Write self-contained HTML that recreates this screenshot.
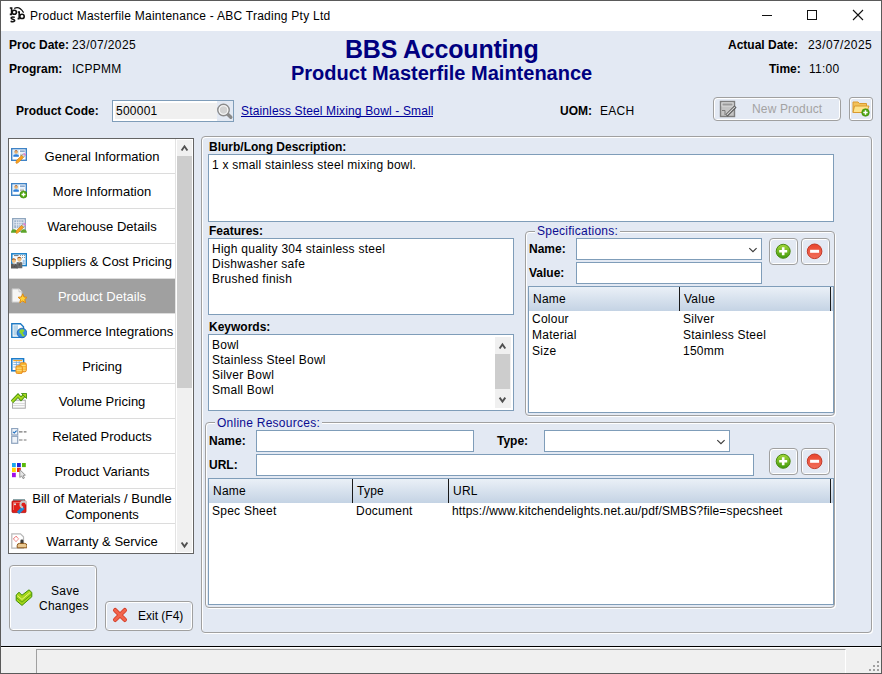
<!DOCTYPE html>
<html><head><meta charset="utf-8">
<style>
*{box-sizing:border-box}
html,body{margin:0;padding:0}
body{width:882px;height:674px;position:relative;overflow:hidden;background:#e3e9f3;font-family:"Liberation Sans",sans-serif;color:#000}
.a{position:absolute}
.t{position:absolute;white-space:nowrap;font-size:12px;line-height:12px;letter-spacing:0.25px}
.b{font-weight:bold;letter-spacing:0}
.box{position:absolute;background:#fff;border:1px solid #7f9db9}
.grp{position:absolute;border:1px solid #a0a0a0;border-radius:4px;box-shadow:inset 1px 1px 0 #fff, 1px 1px 0 #fff}
.btn{position:absolute;border:1px solid #a0a0a0;border-radius:4px;background:#e3e9f3;box-shadow:inset 1px 1px 0 #fff,inset -1px -1px 0 #fff}
.hdr{position:absolute;background:linear-gradient(#eaf0f7,#c4d3e4)}
.sep{position:absolute;background:#1a1a1a;width:1px}
.nt{position:absolute;left:29px;width:146px;text-align:center;font-size:13px;line-height:13px;white-space:nowrap}
.gl{position:absolute;white-space:nowrap;font-size:12px;line-height:12px;color:#0c0c90;background:#e3e9f3;padding:0 2px}
</style></head>
<body>
<!-- window frame -->
<div class="a" style="left:0;top:0;width:882px;height:31px;background:#fff"></div>
<div class="a" style="left:0;top:646px;width:882px;height:1px;background:#000"></div>
<div class="a" style="left:0;top:647px;width:882px;height:27px;background:#f0f0f0;border-top:1px solid #fff"></div>
<div class="a" style="left:36px;top:649px;width:810px;height:24px;border-left:1px solid #a0a0a0;border-top:1px solid #a0a0a0;border-right:1px solid #fff"></div>
<div class="a" style="left:0;top:0;width:882px;height:674px;border:1px solid #5a5a5a"></div>

<!-- title bar -->
<div class="t" style="left:30px;top:10px">Product Masterfile Maintenance - ABC Trading Pty Ltd</div>

<!-- header -->
<div class="t b" style="left:9px;top:39px">Proc Date:</div>
<div class="t" style="left:72px;top:39px;letter-spacing:0.4px">23/07/2025</div>
<div class="t b" style="left:9px;top:63px">Program:</div>
<div class="t" style="left:72px;top:63px">ICPPMM</div>
<div class="t b" style="left:345px;top:37px;font-size:25px;line-height:25px;letter-spacing:-0.2px;color:#000080">BBS Accounting</div>
<div class="t b" style="left:291px;top:63px;font-size:20px;line-height:20px;color:#000080">Product Masterfile Maintenance</div>
<div class="t b" style="left:728px;top:39px">Actual Date:</div>
<div class="t" style="left:808px;top:39px;letter-spacing:0.4px">23/07/2025</div>
<div class="t b" style="left:769px;top:63px">Time:</div>
<div class="t" style="left:809px;top:63px">11:00</div>

<div class="t b" style="left:16px;top:105px">Product Code:</div>
<div class="box" style="left:112px;top:100px;width:122px;height:22px"></div><div class="a" style="left:115px;top:103px;width:102px;height:16px;background:#f0f0f0"></div>
<div class="t" style="left:116px;top:105px">500001</div>
<div class="t" style="left:241px;top:105px;color:#00009a;letter-spacing:0.15px">Stainless Steel Mixing Bowl - Small</div><div class="a" style="left:241px;top:116px;width:192px;height:1px;background:#00009a"></div>
<div class="t b" style="left:560px;top:105px">UOM:</div>
<div class="t" style="left:600px;top:105px">EACH</div>
<div class="btn" style="left:713px;top:97px;width:128px;height:24px"></div>
<div class="t" style="left:752px;top:103px;letter-spacing:0.15px;color:#a3a3a3">New Product</div>
<div class="btn" style="left:849px;top:97px;width:24px;height:24px;border-radius:3px"></div>

<!-- nav list -->
<div class="a" style="left:8px;top:138px;width:186px;height:416px;background:#fff;border:1px solid #646464"></div>
<div class="a" style="left:9px;top:173px;width:166px;height:1px;background:#dcdcdc"></div>
<div class="nt" style="top:150px">General Information</div>
<div class="a" style="left:9px;top:208px;width:166px;height:1px;background:#dcdcdc"></div>
<div class="nt" style="top:185px">More Information</div>
<div class="a" style="left:9px;top:243px;width:166px;height:1px;background:#dcdcdc"></div>
<div class="nt" style="top:220px">Warehouse Details</div>
<div class="a" style="left:9px;top:278px;width:166px;height:1px;background:#dcdcdc"></div>
<div class="nt" style="top:255px">Suppliers &amp; Cost Pricing</div>
<div class="a" style="left:9px;top:279px;width:166px;height:34px;background:#a0a0a0"></div>
<div class="a" style="left:9px;top:313px;width:166px;height:1px;background:#dcdcdc"></div>
<div class="nt" style="top:290px;color:#fff">Product Details</div>
<div class="a" style="left:9px;top:348px;width:166px;height:1px;background:#dcdcdc"></div>
<div class="nt" style="top:325px">eCommerce Integrations</div>
<div class="a" style="left:9px;top:383px;width:166px;height:1px;background:#dcdcdc"></div>
<div class="nt" style="top:360px">Pricing</div>
<div class="a" style="left:9px;top:418px;width:166px;height:1px;background:#dcdcdc"></div>
<div class="nt" style="top:395px">Volume Pricing</div>
<div class="a" style="left:9px;top:453px;width:166px;height:1px;background:#dcdcdc"></div>
<div class="nt" style="top:430px">Related Products</div>
<div class="a" style="left:9px;top:488px;width:166px;height:1px;background:#dcdcdc"></div>
<div class="nt" style="top:465px">Product Variants</div>
<div class="a" style="left:9px;top:523px;width:166px;height:1px;background:#dcdcdc"></div>
<div class="nt" style="top:491px;line-height:16px">Bill of Materials / Bundle<br>Components</div>
<div class="nt" style="top:535px">Warranty &amp; Service</div>

<!--ICONS-->
<svg class="a" style="left:11px;top:148px" width="16" height="16" viewBox="0 0 16 16"><rect x="0.7" y="0.7" width="14.6" height="11.6" fill="#fff" stroke="#3f83c6" stroke-width="1.4"/>
<rect x="3" y="12" width="2" height="1" fill="#3f83c6"/><rect x="7" y="12" width="3" height="1" fill="#3f83c6"/>
<rect x="2.2" y="2.2" width="5.8" height="6.6" fill="#d6ecfa"/>
<circle cx="5.1" cy="4.2" r="1.6" fill="#e8b070"/><path d="M3.4 4 Q3.6 2.2 5.1 2.3 Q6.7 2.2 6.8 4 Q6 3 5.1 3.1 Q4.2 3 3.4 4Z" fill="#9a4a18"/>
<path d="M2.4 8.8 L2.4 7 Q5.1 5.4 7.8 7 L7.8 8.8Z" fill="#2f7ed8"/>
<rect x="9" y="2.6" width="4.8" height="1" fill="#3a6fb0"/><rect x="9" y="4.6" width="4.8" height="1" fill="#cfe3f5"/><rect x="9" y="6.6" width="4" height="1" fill="#888"/><path d="M5.6 15.6 L4.8 14.8 L5.4 12.6 L10.8 7.2 L12.8 9.2 L7.4 14.6Z" fill="#f7a21e" stroke="#c86e08" stroke-width="0.5"/>
<path d="M10.8 7.2 L12.2 5.8 L14.2 7.8 L12.8 9.2Z" fill="#d8d8d8" stroke="#777" stroke-width="0.4"/>
<path d="M12.2 5.8 L13.2 4.8 L15.2 6.8 L14.2 7.8Z" fill="#e27ad2"/></svg>
<svg class="a" style="left:11px;top:183px" width="16" height="16" viewBox="0 0 16 16"><rect x="0.7" y="0.7" width="14.6" height="11.6" fill="#fff" stroke="#3f83c6" stroke-width="1.4"/>
<rect x="3" y="12" width="2" height="1" fill="#3f83c6"/><rect x="7" y="12" width="3" height="1" fill="#3f83c6"/>
<rect x="2.2" y="2.2" width="5.8" height="6.6" fill="#d6ecfa"/>
<circle cx="5.1" cy="4.2" r="1.6" fill="#e8b070"/><path d="M3.4 4 Q3.6 2.2 5.1 2.3 Q6.7 2.2 6.8 4 Q6 3 5.1 3.1 Q4.2 3 3.4 4Z" fill="#9a4a18"/>
<path d="M2.4 8.8 L2.4 7 Q5.1 5.4 7.8 7 L7.8 8.8Z" fill="#2f7ed8"/>
<rect x="9" y="2.6" width="4.8" height="1" fill="#3a6fb0"/><rect x="9" y="4.6" width="4.8" height="1" fill="#cfe3f5"/><rect x="9" y="6.6" width="4" height="1" fill="#888"/><circle cx="12.5" cy="11.5" r="3.6" fill="#4ea40e" stroke="#3d8a0a" stroke-width="0.6"/><path d="M10.5 11.5H14.5M12.5 9.5V13.5" stroke="#fff" stroke-width="1.4"/></svg>
<svg class="a" style="left:11px;top:218px" width="16" height="16" viewBox="0 0 16 16"><rect x="1.7" y="0.7" width="12.6" height="12.6" fill="#f4f8fc" stroke="#8aa2bc" stroke-width="1.3"/>
<rect x="3.2" y="2.2" width="9.4" height="8" fill="#9fb4cc"/>
<path d="M3.2 4.6H12.6M3.2 6.8H12.6M5.6 2.2V10.2M7.8 2.2V10.2M10 2.2V10.2" stroke="#e8eef6" stroke-width="0.8"/>
<path d="M0 14.8 Q0 11.2 3 11.2 Q6 11.2 6 14.8Z M9.8 14.8 Q9.8 11.2 12.8 11.2 Q15.8 11.2 15.8 14.8Z" fill="#5ea52a"/><path d="M5.6 15.6 L4.8 14.8 L5.4 12.6 L10.8 7.2 L12.8 9.2 L7.4 14.6Z" fill="#f7a21e" stroke="#c86e08" stroke-width="0.5"/>
<path d="M10.8 7.2 L12.2 5.8 L14.2 7.8 L12.8 9.2Z" fill="#d8d8d8" stroke="#777" stroke-width="0.4"/>
<path d="M12.2 5.8 L13.2 4.8 L15.2 6.8 L14.2 7.8Z" fill="#e27ad2"/></svg>
<svg class="a" style="left:11px;top:253px" width="16" height="16" viewBox="0 0 16 16"><rect x="0.8" y="0.8" width="14.6" height="11.8" fill="#f4fafe" stroke="#1a80c8" stroke-width="1.5"/>
<path d="M3 2.6H7.5" stroke="#777" stroke-width="1"/><circle cx="9.5" cy="2.6" r="0.5" fill="#777"/><circle cx="11.5" cy="2.6" r="0.5" fill="#777"/><circle cx="13.5" cy="2.6" r="0.5" fill="#777"/>
<circle cx="11.5" cy="4.5" r="0.5" fill="#777"/><circle cx="13.5" cy="4.5" r="0.5" fill="#777"/>
<path d="M11.5 8H14.5M11.5 10.2H14.5M12.8 6.8V11" stroke="#8ab8e0" stroke-width="0.9"/>
<path d="M5.5 11 L5.5 9.5 Q8.4 8.2 11.3 9.5 L11.3 15.3 L5.5 15.3Z" fill="#6a6a6a"/>
<path d="M7.6 9 L8.4 13 L9.2 9Z" fill="#fff"/><path d="M8.4 9.4 V12.6" stroke="#222" stroke-width="0.8"/>
<circle cx="8.4" cy="6.4" r="2.1" fill="#f0c080"/><path d="M6.2 6.2 Q6.2 3.8 8.4 3.8 Q10.6 3.8 10.6 6.4 Q9.8 5 8.4 5.1 Q7 5 6.2 6.2Z" fill="#a0561e"/>
<path d="M0 15.6 L0 11 Q2.7 9.8 5.5 11 L7 15.6Z" fill="#5a5a5a"/>
<path d="M2 10.5 L2.8 14.2 L3.6 10.5Z" fill="#fff"/><path d="M2.8 10.8 V13.8" stroke="#222" stroke-width="0.8"/>
<circle cx="2.9" cy="7.8" r="2.1" fill="#f0c080"/><path d="M0.7 7.6 Q0.7 5.2 2.9 5.2 Q5.1 5.2 5.1 7.8 Q4.3 6.4 2.9 6.5 Q1.5 6.4 0.7 7.6Z" fill="#a0561e"/></svg>
<svg class="a" style="left:11px;top:288px" width="16" height="16" viewBox="0 0 16 16"><path d="M1 0.8 H8 L11 3.8 V14.2 H1Z" fill="#f5f5f5" stroke="#bdbdbd" stroke-width="1"/>
<path d="M8 0.8 V3.8 H11" fill="#fff" stroke="#bdbdbd" stroke-width="0.8"/>
<path d="M11.7 5.8 L13 9 L16.3 9.3 L13.8 11.4 L14.6 14.8 L11.7 13 L8.8 14.8 L9.6 11.4 L7.1 9.3 L10.4 9 Z" fill="#ffd23a" stroke="#e08a10" stroke-width="1"/></svg>
<svg class="a" style="left:11px;top:323px" width="16" height="16" viewBox="0 0 16 16"><path d="M0.8 0.8 H9.5 L12.5 3.8 V14.4 H0.8Z" fill="#fff" stroke="#1e7ac4" stroke-width="1.4"/>
<rect x="2.4" y="2.3" width="4.6" height="10.2" fill="#b9d6ea"/>
<circle cx="11" cy="10" r="4.8" fill="#3a8ee0" stroke="#1a5fb0" stroke-width="0.8"/>
<path d="M9 7 Q11.5 5.5 13.5 7.5 Q12.8 9.5 11.5 9.5 Q12.5 12 14 12.5 Q12.5 14 11 13 Q10.5 10.5 8.6 10 Q8 8 9 7Z" fill="#8fd62a"/></svg>
<svg class="a" style="left:11px;top:358px" width="16" height="16" viewBox="0 0 16 16"><rect x="0.8" y="0.8" width="11.8" height="12" fill="#fff" stroke="#1478c8" stroke-width="1.5"/>
<path d="M2.3 2.6H11.3" stroke="#f3a628" stroke-width="1.2"/><path d="M2.3 4.4H11.3M2.3 6.6H11.3M2.3 9H8M5.4 3.2V11M8.2 3.2V11" stroke="#6aa6dc" stroke-width="0.8"/>
<rect x="9" y="4.8" width="6.3" height="9" rx="1.5" fill="#f7b733" stroke="#e98a1a" stroke-width="1"/>
<path d="M9.6 7.5H14.7M9.6 10H14.7M9.6 12.3H14.7" stroke="#fde28a" stroke-width="0.9"/>
<rect x="5" y="7.8" width="6.3" height="7.8" rx="1.5" fill="#f7b733" stroke="#e98a1a" stroke-width="1"/>
<path d="M5.6 10.2H10.7M5.6 12.6H10.7" stroke="#fde28a" stroke-width="0.9"/></svg>
<svg class="a" style="left:11px;top:393px" width="16" height="16" viewBox="0 0 16 16"><rect x="1.5" y="7.2" width="12.8" height="8" fill="#fafafa" stroke="#a8a8a8" stroke-width="1"/>
<path d="M2 10.5H14M2 12.5H14" stroke="#d6d6d6" stroke-width="0.9"/>
<path d="M1 8.8 L7 2.6 L10 5.8 L14 1.6" fill="none" stroke="#3d8a0a" stroke-width="3.6"/>
<path d="M1 8.8 L7 2.6 L10 5.8 L14 1.6" fill="none" stroke="#a8d820" stroke-width="2"/>
<path d="M10.5 0.4 H15.6 V5.5Z" fill="#a8d820" stroke="#3d8a0a" stroke-width="0.9"/></svg>
<svg class="a" style="left:11px;top:428px" width="16" height="16" viewBox="0 0 16 16"><rect x="0.7" y="0.5" width="6" height="6.5" fill="#f2f6fb" stroke="#8ea4be" stroke-width="1.2"/>
<path d="M2 3.8 L3.3 5 L5.6 2.6" fill="none" stroke="#2070c0" stroke-width="1.1"/>
<rect x="0.7" y="8.3" width="6" height="7" fill="#eef3f9" stroke="#8ea4be" stroke-width="1.2"/>
<path d="M8 3.9H11.5M12.8 3.9H15.5M8 12H11.5M12.8 12H15.5" stroke="#777" stroke-width="1.2"/></svg>
<svg class="a" style="left:11px;top:463px" width="16" height="16" viewBox="0 0 16 16"><rect x="1" y="0" width="3.8" height="4.1" fill="#19a8ee"/><rect x="6" y="0" width="3.8" height="4.1" fill="#2323d8"/><rect x="11" y="0" width="3.8" height="4.1" fill="#5aba0a"/>
<rect x="1" y="4.8" width="3.8" height="4.2" fill="#ffd800"/><rect x="6" y="4.8" width="3.8" height="4.2" fill="#e82a10"/>
<rect x="1" y="9.8" width="3.8" height="4.4" fill="#a010e8"/>
<path d="M8.8 6.6 L8.8 14.5 L10.6 13 L12 15.6 L13.4 15 L12.2 12.4 L14.4 12.2Z" fill="#e6e6e6" stroke="#8a8a8a" stroke-width="0.9"/></svg>
<svg class="a" style="left:11px;top:498px" width="16" height="16" viewBox="0 0 16 16"><rect x="2" y="1.1" width="12" height="1.8" fill="#7e9a9e"/>
<rect x="1" y="2.9" width="14" height="11.7" rx="1" fill="#e0201a" stroke="#b00d0d" stroke-width="0.8"/>
<path d="M2.5 4.5H13M2.5 4.5V12" stroke="#f37a70" stroke-width="0.8"/><circle cx="4" cy="6.3" r="1" fill="#d8f0f8"/>
<path d="M7 15 L12.5 9.5" stroke="#1a8ad8" stroke-width="3.2"/>
<path d="M12 9.5 A3 3 0 1 1 15.5 6.5" fill="none" stroke="#c8c8c8" stroke-width="2"/></svg>
<svg class="a" style="left:11px;top:533px" width="16" height="16" viewBox="0 0 16 16"><path d="M0.8 0.8 H9.5 L12.5 3.8 V15.2 H0.8Z" fill="#fff" stroke="#b8b8b8" stroke-width="1.2"/>
<path d="M5 3.2 L7.6 5.9 L5 8.6 L2.4 5.9Z" fill="none" stroke="#e02020" stroke-width="0.9" stroke-dasharray="1 0.6"/>
<rect x="9.4" y="6.4" width="3" height="4.6" rx="1.4" fill="#3c3c3c"/>
<path d="M6.2 14.8 V12.6 Q6.2 10.4 8.5 10.4 H13.6 Q15.9 10.4 15.9 12.6 V14.8Z" fill="#e9c890" stroke="#8a5418" stroke-width="1"/></svg>
<!--/ICONS-->
<div class="a" style="left:175px;top:139px;width:1px;height:414px;background:#e3e3e3"></div>
<div class="a" style="left:177px;top:140px;width:15px;height:412px;background:#f0f0f0"></div>
<div class="a" style="left:177px;top:156px;width:15px;height:232px;background:#cdcdcd"></div>
<svg class="a" style="left:177px;top:140px" width="15" height="16"><path d="M4.6 10.5 L7.5 6.3 L10.4 10.5" fill="none" stroke="#505050" stroke-width="1.9"/></svg>
<svg class="a" style="left:177px;top:536px" width="15" height="16"><path d="M4.6 6.5 L7.5 10.6 L10.4 6.5" fill="none" stroke="#505050" stroke-width="1.9"/></svg>


<!-- main panel -->
<div class="grp" style="left:201px;top:136px;width:671px;height:497px"></div>
<div class="t b" style="left:209px;top:141px">Blurb/Long Description:</div>
<div class="box" style="left:208px;top:154px;width:626px;height:68px"></div>
<div class="t" style="left:212px;top:159px;letter-spacing:0.23px">1 x small stainless steel mixing bowl.</div>

<div class="t b" style="left:209px;top:225px">Features:</div>
<div class="box" style="left:208px;top:238px;width:306px;height:77px"></div>
<div class="t" style="left:212px;top:243px;letter-spacing:0.26px">High quality 304 stainless steel</div>
<div class="t" style="left:212px;top:258px;letter-spacing:0.3px">Dishwasher safe</div>
<div class="t" style="left:212px;top:273px;letter-spacing:0.29px">Brushed finish</div>

<div class="t b" style="left:209px;top:321px">Keywords:</div>
<div class="box" style="left:208px;top:334px;width:306px;height:77px"></div>
<div class="t" style="left:212px;top:339px">Bowl</div>
<div class="t" style="left:212px;top:354px">Stainless Steel Bowl</div>
<div class="t" style="left:212px;top:369px">Silver Bowl</div>
<div class="t" style="left:212px;top:384px">Small Bowl</div>
<div class="a" style="left:495px;top:337px;width:16px;height:71px;background:#f0f0f0"></div>
<div class="a" style="left:495px;top:354px;width:15px;height:35px;background:#cdcdcd"></div>
<svg class="a" style="left:495px;top:337px" width="16" height="17"><path d="M4.6 11.5 L7.45 7.5 L10.3 11.5" fill="none" stroke="#505050" stroke-width="1.9"/></svg>
<svg class="a" style="left:495px;top:391px" width="16" height="17"><path d="M4.6 6.6 L7.45 10.6 L10.3 6.6" fill="none" stroke="#505050" stroke-width="1.9"/></svg>

<!-- specifications -->
<div class="grp" style="left:525px;top:231px;width:310px;height:185px"></div>
<div class="gl" style="left:535px;top:225px;letter-spacing:0.25px">Specifications:</div>
<div class="t b" style="left:529px;top:243px">Name:</div>
<div class="t b" style="left:529px;top:267px">Value:</div>
<div class="box" style="left:576px;top:238px;width:186px;height:22px"></div>
<svg class="a" style="left:745px;top:243px" width="14" height="12"><path d="M4.3 5.2 L7.95 8.7 L11.6 5.2" fill="none" stroke="#3a3a3a" stroke-width="1.15"/></svg>
<div class="box" style="left:576px;top:262px;width:186px;height:22px"></div>
<div class="btn" style="left:769px;top:238px;width:29px;height:27px"></div>
<div class="btn" style="left:801px;top:238px;width:29px;height:27px"></div>
<div class="box" style="left:528px;top:286px;width:306px;height:127px"></div>
<div class="hdr" style="left:529px;top:287px;width:304px;height:24px"></div>
<div class="sep" style="left:679px;top:287px;height:24px"></div>
<div class="sep" style="left:830px;top:287px;height:24px"></div>
<div class="t" style="left:533px;top:293px">Name</div>
<div class="t" style="left:684px;top:293px">Value</div>
<div class="t" style="left:532px;top:313px">Colour</div>
<div class="t" style="left:683px;top:313px">Silver</div>
<div class="t" style="left:532px;top:329px">Material</div>
<div class="t" style="left:683px;top:329px">Stainless Steel</div>
<div class="t" style="left:532px;top:345px">Size</div>
<div class="t" style="left:683px;top:345px">150mm</div>

<!-- online resources -->
<div class="grp" style="left:205px;top:422px;width:630px;height:186px"></div>
<div class="gl" style="left:215px;top:417px;letter-spacing:0.25px">Online Resources:</div>
<div class="t b" style="left:209px;top:435px">Name:</div>
<div class="t b" style="left:209px;top:459px">URL:</div>
<div class="t b" style="left:497px;top:435px">Type:</div>
<div class="box" style="left:256px;top:430px;width:218px;height:22px"></div>
<div class="box" style="left:544px;top:430px;width:186px;height:22px"></div>
<svg class="a" style="left:713px;top:435px" width="14" height="12"><path d="M4.3 5.2 L7.95 8.7 L11.6 5.2" fill="none" stroke="#3a3a3a" stroke-width="1.15"/></svg>
<div class="box" style="left:256px;top:454px;width:498px;height:22px"></div>
<div class="btn" style="left:769px;top:448px;width:29px;height:27px"></div>
<div class="btn" style="left:801px;top:448px;width:29px;height:27px"></div>
<div class="box" style="left:208px;top:478px;width:626px;height:127px"></div>
<div class="hdr" style="left:209px;top:479px;width:624px;height:24px"></div>
<div class="sep" style="left:352px;top:479px;height:24px"></div>
<div class="sep" style="left:448px;top:479px;height:24px"></div>
<div class="sep" style="left:830px;top:479px;height:24px"></div>
<div class="t" style="left:213px;top:485px">Name</div>
<div class="t" style="left:357px;top:485px">Type</div>
<div class="t" style="left:453px;top:485px">URL</div>
<div class="t" style="left:212px;top:505px">Spec Sheet</div>
<div class="t" style="left:356px;top:505px">Document</div>
<div class="t" style="left:452px;top:505px;letter-spacing:0.15px">https://www.kitchendelights.net.au/pdf/SMBS?file=specsheet</div>

<!-- bottom buttons -->
<div class="btn" style="left:9px;top:565px;width:88px;height:66px"></div>
<div class="btn" style="left:105px;top:601px;width:88px;height:30px"></div>
<!--EXTRA-->
<svg class="a" style="left:0;top:0" width="30" height="30">
<g fill="none" stroke="#111">
<path d="M9.8 8 H11.6 V14.4 M9.8 14.4 H12" stroke-width="1.6"/><ellipse cx="14.3" cy="12.3" rx="2.1" ry="2" stroke-width="1.6"/>
<path d="M17.8 12 H19.2 V18.6 M17.6 18.6 H19.6" stroke-width="1.6"/><ellipse cx="22" cy="16.4" rx="2.2" ry="2.1" stroke-width="1.6"/>
<path d="M14.8 17.4 Q12.6 16.4 11.3 17.5 Q10.8 18.8 12.8 19.2 Q15.2 19.8 14.6 21 Q13.2 22.2 10.6 21.2" stroke-width="1.5"/>
<path d="M14.2 8.6 Q19.2 5.6 23.6 12.6" stroke-width="1.2"/>
</g></svg>
<div class="a" style="left:762px;top:15px;width:10px;height:1px;background:#111"></div>
<div class="a" style="left:807px;top:10px;width:10px;height:10px;border:1px solid #111"></div>
<svg class="a" style="left:852px;top:9px" width="12" height="12"><path d="M1 1 L11 11 M11 1 L1 11" stroke="#111" stroke-width="1.1"/></svg>
<!-- magnifier -->
<div class="a" style="left:217px;top:101px;width:16px;height:20px;background:#e3e9f3"></div>
<svg class="a" style="left:215px;top:101px" width="20" height="20">
<path d="M12.5 13 L15.8 16.3" stroke="#8a8a8a" stroke-width="3.4" stroke-linecap="round"/>
<circle cx="8.5" cy="9" r="5.7" fill="#d2d2d2" stroke="#8c8c8c" stroke-width="1.5"/>
<circle cx="8.5" cy="9" r="4.3" fill="none" stroke="#f8f8f8" stroke-width="1.1"/>
</svg>
<!-- new product icon -->
<svg class="a" style="left:719px;top:100px" width="18" height="18">
<rect x="1.5" y="1.5" width="14" height="15" fill="#c4c4c4" stroke="#7e7e7e" stroke-width="1.4"/>
<rect x="3" y="3" width="11" height="3" fill="#9a9a9a" stroke="#e4e4e4" stroke-width="0.8"/>
<path d="M3 10.5 H6 V15" fill="none" stroke="#7a7a7a" stroke-width="1"/>
<path d="M7.5 15.5 L16.5 6.5" stroke="#4a4a4a" stroke-width="3"/><path d="M7.8 15 L16 6.8" stroke="#d8d8d8" stroke-width="1.2"/>
</svg>
<!-- folder icon -->
<svg class="a" style="left:849px;top:97px" width="24" height="24">
<path d="M4 5 H9 L10.5 6.5 H17.5 V15.5 H4Z" fill="#f2c15a" stroke="#d99a2e" stroke-width="1"/>
<path d="M5.5 9 H20 L17.5 15.5 H4Z" fill="#fde38c" stroke="#d99a2e" stroke-width="1"/>
<circle cx="16.5" cy="15.5" r="3.8" fill="#4ea40e" stroke="#3d8a0a" stroke-width="0.6"/>
<path d="M14.3 15.5 H18.7 M16.5 13.3 V17.7" stroke="#fff" stroke-width="1.5"/>
</svg>
<!-- plus/minus -->
<svg class="a" style="left:769px;top:238px" width="62" height="27">
<defs><linearGradient id="gg" x1="0" y1="0" x2="0" y2="1"><stop offset="0" stop-color="#a6d83a"/><stop offset="1" stop-color="#3f9a0c"/></linearGradient>
<linearGradient id="rg" x1="0" y1="0" x2="0" y2="1"><stop offset="0" stop-color="#e9452e"/><stop offset="1" stop-color="#f2705c"/></linearGradient></defs>
<circle cx="14.2" cy="13.3" r="7" fill="url(#gg)" stroke="#4a8a16" stroke-width="1"/>
<path d="M10.2 13.3 H18.2 M14.2 9.3 V17.3" stroke="#fff" stroke-width="2.6"/>
<circle cx="45.6" cy="13.3" r="7.3" fill="url(#rg)" stroke="#c23a28" stroke-width="1"/>
<rect x="41.1" y="11.8" width="9" height="3" fill="#fff"/>
</svg>
<svg class="a" style="left:769px;top:448px" width="62" height="27">
<circle cx="14.2" cy="13.3" r="7" fill="url(#gg)" stroke="#4a8a16" stroke-width="1"/>
<path d="M10.2 13.3 H18.2 M14.2 9.3 V17.3" stroke="#fff" stroke-width="2.6"/>
<circle cx="45.6" cy="13.3" r="7.3" fill="url(#rg)" stroke="#c23a28" stroke-width="1"/>
<rect x="41.1" y="11.8" width="9" height="3" fill="#fff"/>
</svg>
<!-- save/exit -->
<svg class="a" style="left:0;top:580px" width="40" height="30">
<path d="M16.2 15 L19 12.3 L22 15.2 L29 9.8 L31.8 12.4 L31.8 16.8 L22 25.4 L16.2 20.6 Z" fill="#a6d61a" stroke="#3f8f05" stroke-width="1" stroke-linejoin="round"/>
<path d="M16.6 17.8 L22 22.2 L31.4 14.3" fill="none" stroke="#4f9a0a" stroke-width="0.9"/>
<path d="M17.2 15.6 L22 19.4 L30 12.6" fill="none" stroke="#e6f47e" stroke-width="1"/>
</svg>
<div class="t" style="left:51px;top:585px">Save</div>
<div class="t" style="left:39px;top:600px">Changes</div>
<svg class="a" style="left:111px;top:606px" width="18" height="18">
<path d="M4.2 4.2 L13.8 13.8 M13.8 4.2 L4.2 13.8" stroke="#d23a24" stroke-width="4.4" stroke-linecap="round"/>
<path d="M4.2 4.2 L13.8 13.8 M13.8 4.2 L4.2 13.8" stroke="#f2644c" stroke-width="2.8" stroke-linecap="round"/>
</svg>
<div class="t" style="left:138px;top:610px;letter-spacing:0">Exit (F4)</div>
<!-- grip -->
<svg class="a" style="left:867px;top:660px" width="14" height="12"><g fill="#a0a0a0"><rect x="10" y="1" width="2" height="2"/><rect x="6" y="5" width="2" height="2"/><rect x="10" y="5" width="2" height="2"/><rect x="2" y="9" width="2" height="2"/><rect x="6" y="9" width="2" height="2"/><rect x="10" y="9" width="2" height="2"/></g></svg>
<!--/EXTRA-->
</body></html>
